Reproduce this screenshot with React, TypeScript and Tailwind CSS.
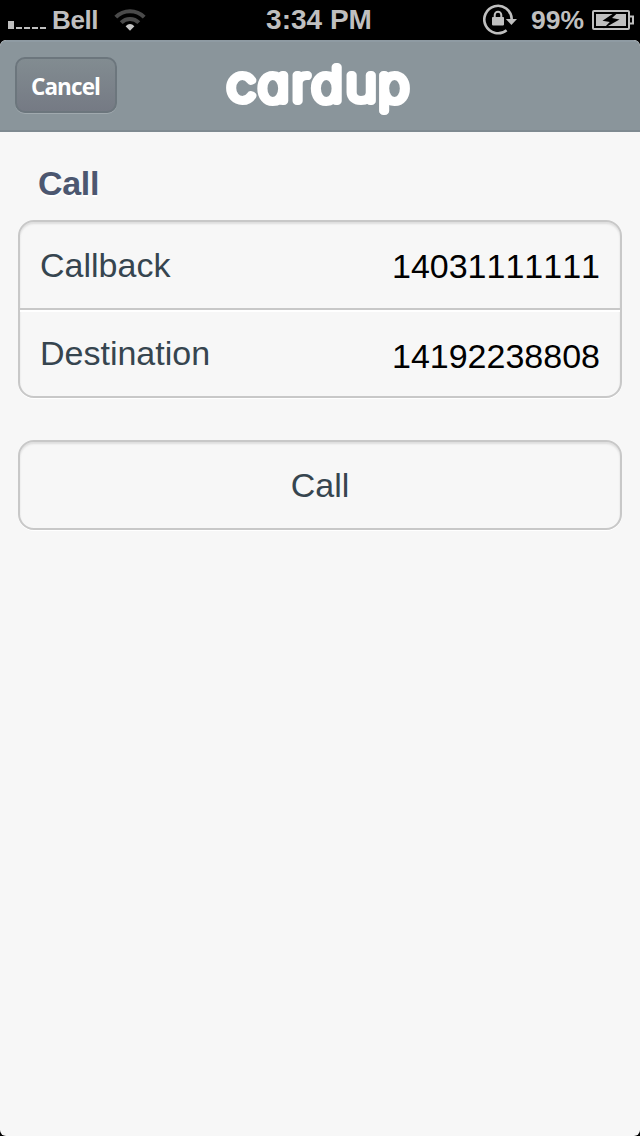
function SignalBars() {
  return (
    <div className="flex items-end gap-[2px]">
      <span className="h-2 w-1.5 bg-[#bfbfbf]" />
      <span className="h-[2px] w-1.5 bg-[#bfbfbf]" />
      <span className="h-[2px] w-1.5 bg-[#bfbfbf]" />
      <span className="h-[2px] w-1.5 bg-[#bfbfbf]" />
      <span className="h-[2px] w-1.5 bg-[#bfbfbf]" />
    </div>
  );
}

function WifiIcon() {
  return (
    <svg width="32" height="24" viewBox="0 0 32 24" fill="none">
      <path d="M1.8 9.2A20 20 0 0 1 30.2 9.2" stroke="#4a4a4a" strokeWidth="4" />
      <path d="M7.2 14.6A12.4 12.4 0 0 1 24.8 14.6" stroke="#4a4a4a" strokeWidth="4" />
      <path d="M11.6 18.2Q16 14 20.4 18.2L16 22.8Z" fill="#c6c6c6" />
    </svg>
  );
}

function LockIcon() {
  return (
    <svg width="36" height="32" viewBox="0 0 36 32" fill="none">
      <path d="M23.6 26.2A13.7 13.7 0 1 1 28.7 15" stroke="#bfbfbf" strokeWidth="2.6" />
      <path d="M22.8 15H34L28.4 21Z" fill="#bfbfbf" />
      <rect x="9" y="13" width="12" height="8.4" rx="0.8" fill="#bfbfbf" />
      <path d="M11.7 13.8V11a3.3 3.3 0 0 1 6.6 0v2.8" stroke="#bfbfbf" strokeWidth="2" />
    </svg>
  );
}

function BatteryIcon() {
  return (
    <svg width="42" height="20" viewBox="0 0 42 20" fill="none">
      <rect x="1" y="1" width="36" height="18" rx="1" stroke="#bfbfbf" strokeWidth="2" />
      <path d="M38 6.5H41V13.5H38" stroke="#bfbfbf" strokeWidth="2" />
      <rect x="4" y="4" width="30" height="12" fill="#bfbfbf" />
      <path
        d="M23.5 2L10.5 10.8L17.8 12L11.5 18.5L27.5 9.4L20 8L26.5 2Z"
        fill="#000"
      />
    </svg>
  );
}

function StatusBar() {
  return (
    <div className="grid h-10 grid-cols-3 items-center bg-black text-[26px] leading-10 font-bold text-[#bfbfbf]">
      <div className="flex items-center pl-2">
        <div className="pt-[9px]">
          <SignalBars />
        </div>
        <span className="ml-1.5 tracking-[-0.4px]">Bell</span>
        <span className="ml-4">
          <WifiIcon />
        </span>
      </div>
      <div className="pr-[2px] text-center text-[28px]">3:34 PM</div>
      <div className="flex items-center justify-end pr-[6px]">
        <LockIcon />
        <span className="mr-2 ml-3 text-[26.5px]">99%</span>
        <BatteryIcon />
      </div>
    </div>
  );
}

function Logo() {
  return (
    <svg width="188" height="68" viewBox="0 0 188 68" className="overflow-visible">
      <text
        x="1.2 29.4 59.5 77.5 108 137.3"
        y="49.6"
        transform="scale(1.11 1)"
        fill="#fff"
        stroke="#fff"
        strokeWidth="8"
        strokeLinejoin="round"
        strokeLinecap="round"
        className="font-['Inter',sans-serif] text-[47px] font-thin [font-feature-settings:'cv11']"
      >
        cardup
      </text>
    </svg>
  );
}

function Header() {
  return (
    <header className="grid h-[92px] grid-cols-[211px_1fr_211px] items-center rounded-t-[6px] border-t-2 border-b-2 border-t-[#8f9ba3] border-b-[#7f8a91] bg-[#8a959b] pb-[2px]">
      <button className="ml-[15px] h-14 w-[102px] rounded-[10px] border-2 border-[#6c767d] bg-linear-to-b from-[#828c91] to-[#757a84] pt-[3px] pr-px font-['Open_Sans',sans-serif] text-[22.5px] font-bold tracking-[-0.9px] text-white shadow-[0_1px_0_#a0a9ae]">
        Cancel
      </button>
      <div className="flex justify-center">
        <Logo />
      </div>
    </header>
  );
}

const FIELDS = [
  { label: "Callback", value: "14031111111" },
  { label: "Destination", value: "14192238808" },
];

export default function App() {
  return (
    <div className="h-[1136px] w-[640px] bg-black font-['Liberation_Sans',Arial,sans-serif]">
      <StatusBar />
      <div className="h-[1096px] overflow-hidden rounded-[6px] bg-[#f7f7f7]">
        <Header />
        <main className="px-[18px] pt-[31px]">
          <h2 className="pl-5 text-[34px] leading-10 font-bold tracking-[-0.3px] text-[#4c5770] [text-shadow:0_2px_0_#fff]">
            Call
          </h2>
          <div className="mt-[17px] rounded-2xl border-2 border-[#c8c8c8] shadow-[inset_0_2px_2px_#dedede,0_1px_0_#fff]">
            {FIELDS.map((f) => (
              <div
                key={f.label}
                className="group flex h-[86px] items-center justify-between px-5 text-[34px] last:h-[88px] last:border-t-2 last:border-[#c8c8c8] last:shadow-[inset_0_2px_0_#fff]"
              >
                <span className="text-[#36454f]">{f.label}</span>
                <span className="pt-[2px] text-black [font-kerning:none] group-last:pt-[6px]">
                  {f.value}
                </span>
              </div>
            ))}
          </div>
          <button className="mt-[42px] h-[90px] w-full rounded-2xl border-2 border-[#c8c8c8] text-[34px] text-[#36454f] shadow-[inset_0_2px_2px_#dedede,0_1px_0_#fff]">
            Call
          </button>
        </main>
      </div>
    </div>
  );
}
